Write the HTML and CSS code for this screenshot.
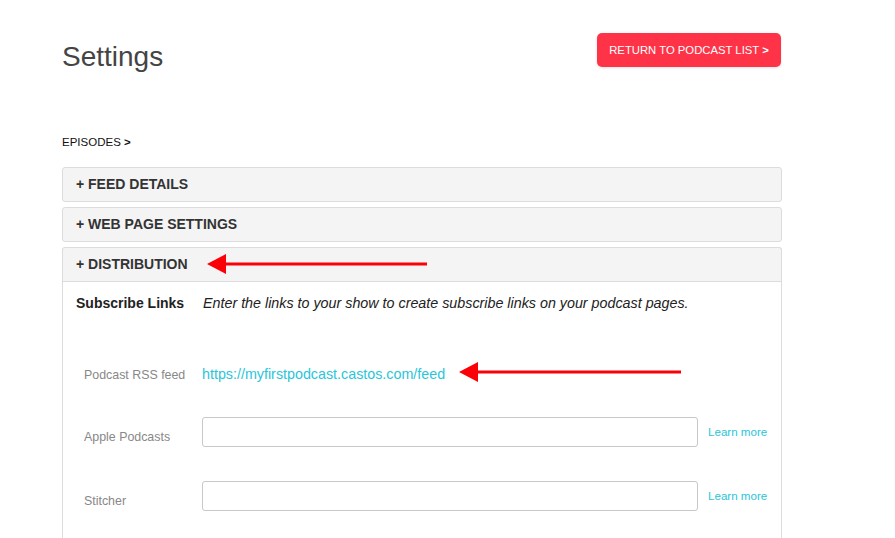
FILE: index.html
```html
<!DOCTYPE html>
<html>
<head>
<meta charset="utf-8">
<link rel="stylesheet" href="styles.css">
</head>
<body>
<div class="page">
  <div class="top">
    <h1 class="title">Settings</h1>
    <a class="return-btn">RETURN TO PODCAST LIST <b>&gt;</b></a>
  </div>
  <div class="crumb">EPISODES <b>&gt;</b></div>

  <div class="acc acc-first">
    <div class="acc-head">+ FEED DETAILS</div>
  </div>
  <div class="acc">
    <div class="acc-head">+ WEB PAGE SETTINGS</div>
  </div>
  <div class="acc open">
    <div class="acc-head">+ DISTRIBUTION</div>
    <div class="acc-body">
      <div class="intro">
        <span class="intro-title">Subscribe Links</span>
        <span class="intro-desc">Enter the links to your show to create subscribe links on your podcast pages.</span>
      </div>
      <div class="row row-rss">
        <span class="label">Podcast RSS feed</span>
        <a class="feed">https://myfirstpodcast.castos.com/feed</a>
      </div>
      <div class="row row-input">
        <span class="label">Apple Podcasts</span>
        <span class="input"></span>
        <a class="learn">Learn more</a>
      </div>
      <div class="row row-input">
        <span class="label">Stitcher</span>
        <span class="input"></span>
        <a class="learn">Learn more</a>
      </div>
    </div>
  </div>

  <svg class="arrow arrow-1" width="230" height="24" viewBox="0 0 230 24">
    <polygon points="0,12 19,2 19,22" fill="#fb0007"/>
    <rect x="17" y="10.5" width="203" height="3" fill="#fb0007"/>
  </svg>
  <svg class="arrow arrow-2" width="230" height="24" viewBox="0 0 230 24">
    <polygon points="0,12 19,2 19,22" fill="#fb0007"/>
    <rect x="17" y="10.5" width="205" height="3" fill="#fb0007"/>
  </svg>
</div>
</body>
</html>
```
FILE: styles.css
```css
html, body {
  margin: 0;
  padding: 0;
  background: #fff;
}
body {
  font-family: "Liberation Sans", Arial, Helvetica, sans-serif;
  color: #222;
  overflow: hidden;
}
.page {
  position: relative;
  width: 720px;
  margin-left: 62px;
  padding-top: 33px;
  height: 505px;
  overflow: hidden;
}
.top {
  display: flex;
  justify-content: space-between;
  align-items: flex-start;
}
.title {
  margin: 7px 0 0 0;
  font-size: 28px;
  line-height: 34px;
  font-weight: normal;
  color: #444;
}
.return-btn {
  display: block;
  width: 184px;
  height: 34px;
  box-sizing: border-box;
  margin-right: 1px;
  background: #fe3347;
  color: #fff;
  font-size: 11.3px;
  line-height: 34px;
  text-align: center;
  border-radius: 5px;
  box-shadow: 0 1px 3px rgba(0,0,0,0.12);
}
.return-btn b {
  font-weight: bold;
}
.crumb {
  margin-top: 61px;
  font-size: 11.5px;
  line-height: 14px;
  color: #111;
}
.crumb b { font-weight: bold; }

.acc {
  margin-top: 5px;
  border: 1px solid #dcdcdc;
  border-radius: 3px;
  background: #f4f4f4;
}
.acc.acc-first {
  margin-top: 18px;
}
.acc-head {
  height: 33px;
  line-height: 33px;
  padding-left: 13px;
  font-size: 14px;
  font-weight: bold;
  color: #333;
}
.acc.open {
  border-bottom: none;
  border-radius: 3px 3px 0 0;
}
.acc-body {
  background: #fff;
  border-top: 1px solid #dcdcdc;
  height: 256px;
  padding-left: 13px;
}
.intro {
  display: flex;
  padding-top: 13px;
  font-size: 14px;
  line-height: 17px;
}
.intro-title {
  font-weight: bold;
  color: #222;
  width: 127px;
}
.intro-desc {
  font-style: italic;
  font-size: 14.3px;
  color: #222;
}
.row {
  display: flex;
  align-items: center;
  padding-left: 8px;
}
.label {
  width: 118px;
  font-size: 12.4px;
  color: #888;
}
.row-rss {
  margin-top: 53px;
}
.row-rss .label {
  padding-top: 3px;
}
.feed {
  font-size: 14.3px;
  color: #29c6d9;
}
.row-input {
  margin-top: 35px;
}
.row-input + .row-input {
  margin-top: 34px;
}
.row-input .label {
  padding-top: 10px;
}
.input {
  display: block;
  width: 496px;
  height: 30px;
  box-sizing: border-box;
  border: 1px solid #c8c8c8;
  border-radius: 3px;
  background: #fff;
}
.learn {
  margin-left: 10px;
  margin-bottom: 2px;
  font-size: 11.6px;
  color: #29c6d9;
}
.arrow {
  position: absolute;
  display: block;
}
.arrow-1 {
  left: 145px;
  top: 252px;
}
.arrow-2 {
  left: 397px;
  top: 360px;
}
```
